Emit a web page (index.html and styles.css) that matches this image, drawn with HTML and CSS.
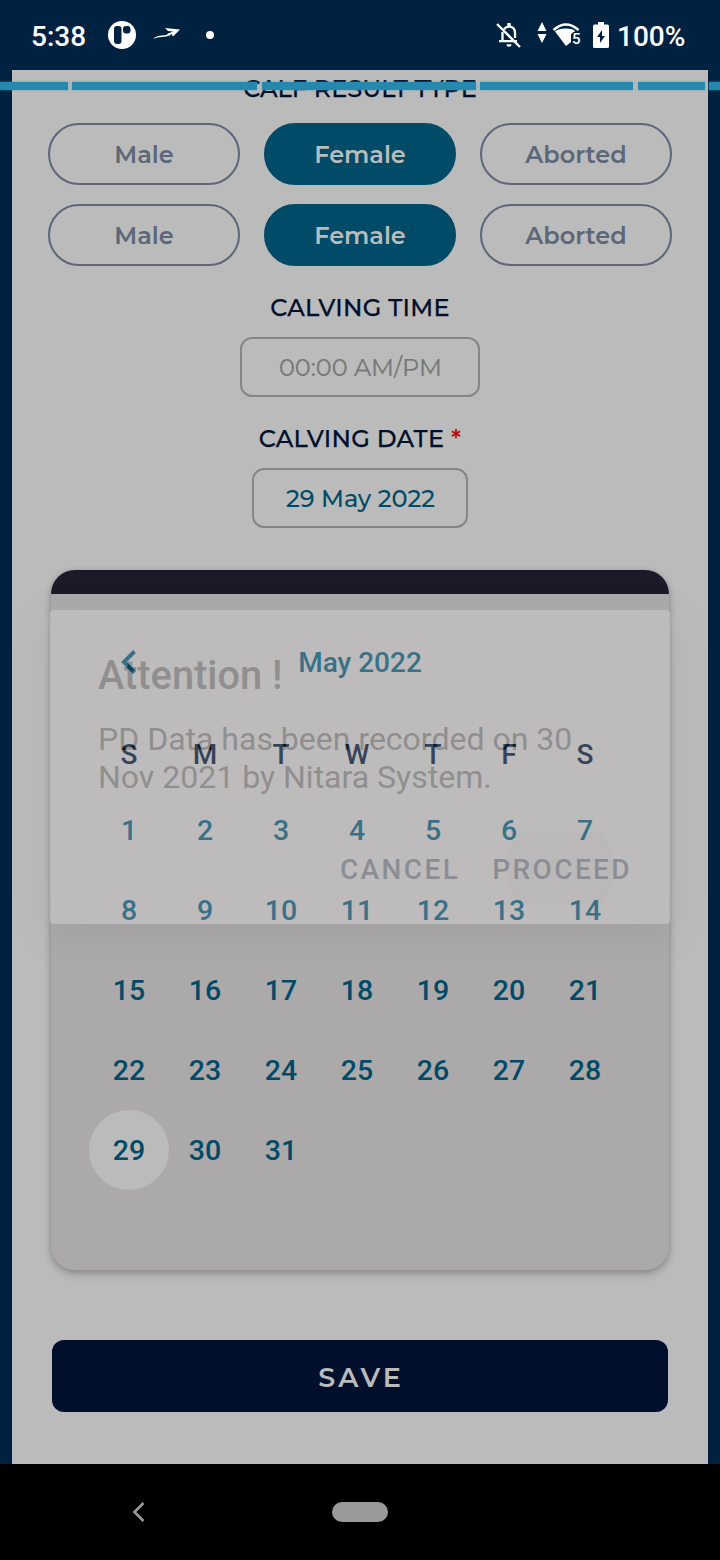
FILE: index.html
```html
<!DOCTYPE html>
<html lang="en">
<head>
<meta charset="utf-8">
<title>Calving record</title>
<link rel="stylesheet" href="styles.css">
</head>
<body>
<div class="phone">
  <header class="status">
    <span class="clock">5:38</span>
    <svg class="app" width="28" height="28" viewBox="0 0 28 28"><circle cx="14" cy="14" r="14" fill="#fff"/><rect x="6" y="5" width="7.500" height="18" rx="3" fill="#002140"/><rect x="15" y="5" width="7.500" height="7.500" rx="3" fill="#002140"/></svg>
    <svg class="plane" width="28" height="14" viewBox="0 0 28 14"><path d="M12 2 27 3.500 20 10.500 18.500 8 14 8 20 5.500 15 5z" fill="#fff"/><path d="M0 13Q3 9.500 9 9.500 13 9.500 17 7L18 9Q13 11 9 11 4 11 0 13" fill="#fff"/></svg>
    <span class="dot"></span>
    <span class="grow"></span>
    <svg class="bell" width="26" height="26" viewBox="0 0 26 26" fill="none" stroke="#fff" stroke-width="2.300"><path d="M8 7.200Q10 4.600 13 4.600q6 0 6 6.400v5M6.500 10v9.200M3 19.200h18"/><path d="M13 4.500V1" stroke-width="3.500"/><path d="M10.500 22.200a2.500 2.500 0 0 0 5 0z" fill="#fff" stroke="none"/><path d="M1 2 24 25"/></svg>
    <svg class="arrows" width="10" height="22" viewBox="0 0 10 22" fill="#fff"><path d="M5 0 9.500 9H.5zM.5 12h9L5 21z"/></svg>
    <svg class="wifi" width="30" height="26" viewBox="0 0 30 26"><path d="M1.500 8Q14-3 26.500 8" fill="none" stroke="#fff" stroke-width="2.500"/><path d="M3 9.500Q6 6.500 14 6.500t9 3L19 12v8l-5 4z" fill="#fff"/><text x="20" y="21.500" class="wifi-num">5</text></svg>
    <svg class="battery" width="16" height="26" viewBox="0 0 16 26"><path d="M5 0h6v2.500h3.500Q16 2.500 16 4v20.500Q16 26 14.500 26h-13Q0 26 0 24.500V4Q0 2.500 1.500 2.500H5z" fill="#fff"/><path d="M9 8v6h3L7 21v-6H4z" fill="#002140"/></svg>
    <span class="pct">100%</span>
  </header>

  <main class="page">
    <h2 class="label calf">CALF RESULT TYPE</h2>
    <div class="choices"><button class="pill">Male</button><button class="pill on">Female</button><button class="pill">Aborted</button></div>
    <div class="choices"><button class="pill">Male</button><button class="pill on">Female</button><button class="pill">Aborted</button></div>
    <h2 class="label time">CALVING TIME</h2>
    <div class="field time-field">00:00 AM/PM</div>
    <h2 class="label date">CALVING DATE <b>*</b></h2>
    <div class="field date-field">29 May 2022</div>

    <section class="calendar">
      <div class="cal-bar"></div>
      <div class="cal-head">
        <svg class="prev" width="16" height="24" viewBox="0 0 16 24"><path d="M13.500 1.500 3 12l10.500 10.500" fill="none" stroke="#004b68" stroke-width="4"/></svg>
        <span class="month">May 2022</span>
      </div>
      <div class="week"><span>S</span><span>M</span><span>T</span><span>W</span><span>T</span><span>F</span><span>S</span></div>
      <div class="days">
        <span>1</span><span>2</span><span>3</span><span>4</span><span>5</span><span>6</span><span>7</span>
        <span>8</span><span>9</span><span>10</span><span>11</span><span>12</span><span>13</span><span>14</span>
        <span>15</span><span>16</span><span>17</span><span>18</span><span>19</span><span>20</span><span>21</span>
        <span>22</span><span>23</span><span>24</span><span>25</span><span>26</span><span>27</span><span>28</span>
        <span class="picked"><i>29</i></span><span>30</span><span>31</span>
      </div>
    </section>

    <button class="save">SAVE</button>
  </main>

  <div class="progress"><i class="s1"></i><i class="s2"></i><i class="s3"></i><i class="s4"></i><i class="s5"></i><i class="s6"></i></div>

  <div class="dialog">
    <h1 class="dialog-title">Attention !</h1>
    <p class="dialog-text">PD Data has been recorded on 30<br>Nov 2021 by Nitara System.</p>
    <div class="actions"><span class="action">CANCEL</span><span class="action proceed">PROCEED<span class="ripple"><i></i></span></span></div>
  </div>

  <nav class="nav">
    <svg class="back" width="14" height="22" viewBox="0 0 14 22"><path d="M11.500 2 2.500 11l9 9" fill="none" stroke="#999" stroke-width="2.600"/></svg>
    <span class="home"></span>
  </nav>
</div>
</body>
</html>
```
FILE: styles.css
```css
* { box-sizing: border-box; }
body { margin: 0; background: #000; font-family: Roboto, sans-serif; }
.phone { position: relative; width: 720px; height: 1560px; display: flex; flex-direction: column; overflow: hidden; }

.status { height: 70px; flex: none; background: #002140; color: #fff; display: flex; align-items: center; padding: 0 35px 0 31px; font-size: 28px; font-weight: 500; }
.clock { width: 77px; padding-top: 3px; }
.app { margin-right: 17px; }
.plane { margin: -4px 25px 0 0; }
.dot { width: 8px; height: 8px; border-radius: 50%; background: #fff; }
.grow { flex: 1; }
.bell { margin-right: 15px; }
.arrows { margin: -4px 5px 0 0; }
.wifi { margin-right: 11px; }
.wifi-num { font: 500 15px Roboto, sans-serif; fill: #fff; stroke: #002140; stroke-width: 2px; paint-order: stroke; }
.battery { margin-right: 8px; }
.pct { padding-top: 3px; width: 68px; white-space: nowrap; }

.page { height: 1394px; flex: none; background: #bbb; border: solid #002140; border-width: 0 12px; padding: 4px 36px 0; display: flex; flex-direction: column; align-items: center; font-family: Montserrat, Inter, sans-serif; overflow: hidden; }
.label { flex: none; margin: 0; height: 30px; line-height: 30px; font-size: 24px; font-weight: 500; letter-spacing: .25px; color: #000f2b; -webkit-text-stroke: .25px #000f2b; white-space: nowrap; }
.label b { color: #b01116; -webkit-text-stroke: 0; font-weight: 600; }
.calf { margin-bottom: 19px; letter-spacing: .05px; }
.time, .date { margin: 27px 0 14px; }
.choices { flex: none; width: 624px; display: grid; grid-template-columns: repeat(3, 192px); gap: 24px; }
.choices + .choices { margin-top: 19px; }
.pill { height: 62px; padding: 0; border: 2px solid #5d677a; border-radius: 31px; background: none; color: #5d677a; font: 600 24px Montserrat, Inter, sans-serif; }
.pill.on { background: #004b68; border-color: #004b68; color: #bbb; }
.field { flex: none; height: 60px; padding-left: 1px; border: 2px solid #858585; border-radius: 12px; display: flex; align-items: center; justify-content: center; font-size: 24px; color: #777; }
.time-field { width: 240px; -webkit-text-stroke: .2px #777; }
.date-field { width: 216px; color: #004b68; font-weight: 500; }

.calendar { flex: none; width: 618px; height: 700px; margin-top: 42px; border-radius: 24px; background: #aba9a9; overflow: hidden; box-shadow: 0 4px 8px rgba(0,0,0,.24), 0 0 5px rgba(0,0,0,.08); font: 500 28px Roboto, sans-serif; color: #004b68; }
.cal-bar { height: 24px; background: #1c1a29; }
.cal-head { height: 136px; padding: 0 69px 0 70px; display: flex; align-items: center; }
.prev { width: 16px; }
.month { flex: 1; text-align: center; padding-right: 17px; }
.week, .days { display: grid; grid-template-columns: repeat(7, 76px); padding-left: 40px; text-align: center; }
.week { height: 60px; line-height: 50px; color: #000f2b; }
.days { grid-auto-rows: 80px; line-height: 82px; font-size: 28.500px; }
.picked { display: flex; justify-content: center; }
.picked i { flex: none; width: 80px; height: 80px; border-radius: 50%; background: #bbb; font-style: normal; }

.save { flex: none; width: 616px; height: 72px; margin-top: 70px; padding: 2px 0 0 2px; border: 0; border-radius: 12px; background: #000f2b; color: #bbb; font: 600 27px Montserrat, Inter, sans-serif; letter-spacing: 3px; }

.progress { position: absolute; left: 0; top: 82px; width: 720px; height: 8px; display: flex; gap: 4px; }
.progress i { flex: none; background: #2588ae; box-shadow: 0 0 3px rgba(80,160,185,.7); }
.s1 { width: 68px; } .s2 { width: 185px; } .s3 { width: 214px; } .s4 { width: 153px; } .s5 { width: 67px; } .s6 { width: 12px; }
.s3, .s4, .s5 { margin-left: .5px; }

.dialog { position: absolute; left: 50px; top: 610px; width: 620px; height: 314px; padding: 39px 38px 0 48px; border-radius: 4px; background: #fff; opacity: .216; box-shadow: 0 18px 30px rgba(0,0,0,.12), 0 6px 40px rgba(0,0,0,.12); color: #303030; }
.dialog-title { margin: 0; font-size: 39.800px; line-height: 54px; font-weight: 500; }
.dialog-text { margin: 17px 0 0; font-size: 32px; line-height: 38px; white-space: nowrap; }
.actions { display: flex; justify-content: flex-end; gap: 32px; height: 72px; margin-top: 36px; line-height: 75px; font-size: 28px; font-weight: 500; letter-spacing: 2.400px; color: #1c2c50; }
.proceed { position: relative; }
.ripple { position: absolute; left: 14px; top: 0; width: 108px; height: 72px; overflow: hidden; }
.ripple i { display: block; width: 108px; height: 108px; margin-top: -18px; border-radius: 50%; background: rgba(0,15,43,.06); }

.nav { height: 96px; flex: none; background: #000; display: flex; align-items: center; padding-left: 132px; }
.home { width: 56px; height: 20px; margin-left: 186px; border-radius: 10px; background: #999; }
```
